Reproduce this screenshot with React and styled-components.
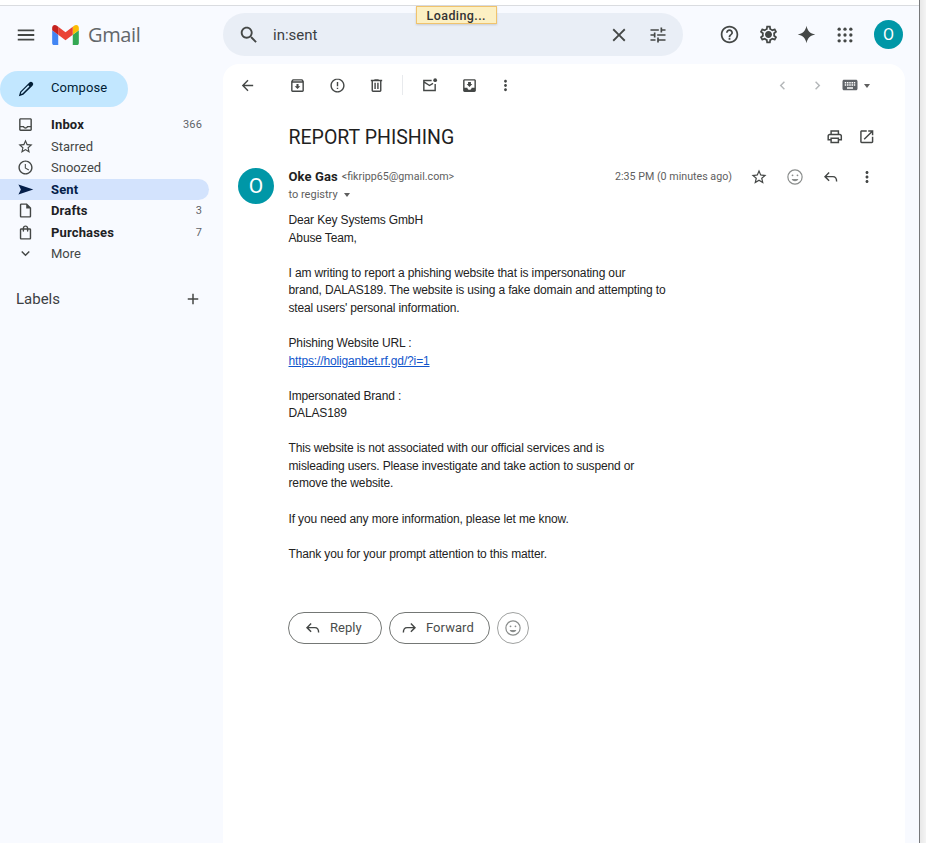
import React from 'react'
import styled, { createGlobalStyle } from 'styled-components'

const GlobalStyle = createGlobalStyle`
  html, body {
    margin: 0;
    padding: 0;
    height: 100%;
    background: #fff;
    overflow: hidden;
  }
  * { box-sizing: border-box; }
`

const Window = styled.div`
  position: relative;
  display: flex;
  width: 926px;
  height: 843px;
  font-family: Roboto, "Liberation Sans", sans-serif;
  color: #202124;
`

const Shell = styled.div`
  width: 919px;
  height: 843px;
  display: flex;
  flex-direction: column;
  background: #f8faff;
  border-top: 1px solid #dadce0;
  margin-top: 5px;
  overflow: hidden;
`

const WindowEdge = styled.div`
  width: 7px;
  height: 843px;
  border-left: 1px solid #77787a;
  background: linear-gradient(to right, #e8e8e8, #f4f4f4);
`

const LoadingTag = styled.div`
  position: absolute;
  left: 415.5px;
  top: 6px;
  width: 81.5px;
  height: 18px;
  display: flex;
  align-items: center;
  justify-content: center;
  background: #fcf0c3;
  border: 1px solid #f0c36d;
  box-shadow: 0 1px 2px rgba(0, 0, 0, 0.15);
  font-size: 12.5px;
  font-weight: 500;
  letter-spacing: 0.4px;
  color: #333;
`

const Header = styled.header`
  height: 58px;
  flex: none;
  display: flex;
  align-items: center;
  padding-bottom: 1px;
`

const Brand = styled.div`
  width: 223px;
  flex: none;
  display: flex;
  align-items: center;
  padding-left: 15px;
`

const Wordmark = styled.span`
  margin-left: 9px;
  font-family: "Open Sans", sans-serif;
  font-size: 20px;
  letter-spacing: -0.35px;
  color: #63676b;
`

const SearchBar = styled.div`
  width: 460px;
  height: 43px;
  flex: none;
  display: flex;
  align-items: center;
  padding: 0 15px 0 15px;
  border-radius: 22px;
  background: #e9eef6;
`

const SearchText = styled.span`
  flex: 1;
  margin-left: 13px;
  font-size: 15px;
  color: #3c4043;
`

const SearchClear = styled.span`
  display: flex;
  margin-right: 18px;
`

const HeaderActions = styled.div`
  flex: 1;
  display: flex;
  align-items: center;
  padding-left: 36px;
  gap: 17.5px;
`

const Avatar = styled.div`
  width: ${(p) => p.$size}px;
  height: ${(p) => p.$size}px;
  flex: none;
  display: flex;
  align-items: center;
  justify-content: center;
  border-radius: 50%;
  background: #0097a7;
  color: #fff;
  font-size: ${(p) => p.$font}px;
`

const TopAvatar = styled(Avatar)`
  margin-left: 2px;
`

const Body = styled.div`
  flex: 1;
  display: flex;
  min-height: 0;
`

const Sidebar = styled.nav`
  width: 223px;
  flex: none;
  padding-top: 7px;
`

const Compose = styled.div`
  width: 128px;
  height: 36px;
  display: flex;
  align-items: center;
  gap: 16px;
  padding-left: 17px;
  margin-bottom: 7px;
  border-radius: 18px;
  background: #c2e7ff;
  font-size: 13px;
  letter-spacing: 0.1px;
  color: #001d35;
`

const ComposeLabel = styled.span`
  margin-bottom: 3px;
`

const NavRow = styled.div`
  width: 209px;
  height: 21.5px;
  display: flex;
  align-items: center;
  padding: 0 7px 0 17px;
  border-radius: 0 11px 11px 0;
  background: ${(p) => (p.$active ? '#d3e3fd' : 'transparent')};
  color: ${(p) => (p.$active ? '#041e49' : '#202124')};
  font-size: 13px;
  font-weight: ${(p) => (p.$bold ? 700 : 400)};
  letter-spacing: ${(p) => (p.$bold ? '0.15px' : '0')};
`

const NavLabel = styled.span`
  flex: 1;
  margin-left: 17px;
  color: ${(p) => (p.$muted ? '#444746' : 'inherit')};
`

const NavCount = styled.span`
  font-size: 11px;
  font-weight: 400;
  color: #5f6368;
`

const LabelsHeading = styled.div`
  width: 209px;
  display: flex;
  align-items: center;
  justify-content: space-between;
  margin-top: 25px;
  padding: 0 7px 0 16px;
  font-size: 15px;
  color: #3c4043;
`

const Card = styled.main`
  width: 682px;
  flex: none;
  background: #fff;
  border-radius: 16px 16px 0 0;
`

const Toolbar = styled.div`
  height: 42px;
  display: flex;
  align-items: center;
  padding: 0 35px 0 16px;
`

const ToolGroup = styled.div`
  display: flex;
  align-items: center;
  gap: ${(p) => p.$gap || 0}px;
  margin-left: ${(p) => p.$left || 0}px;
`

const ToolDivider = styled.span`
  width: 1px;
  height: 20px;
  margin: 0 18px 0 17px;
  background: #e8eaed;
`

const Spacer = styled.span`
  flex: 1;
`

const SubjectRow = styled.div`
  display: flex;
  align-items: center;
  height: 32px;
  margin-top: 15px;
  padding: 0 30px 0 65.5px;
`

const Subject = styled.h1`
  flex: 1;
  margin: 0;
  font-size: 19.5px;
  font-weight: 400;
  color: #1f1f1f;
`

const SubjectActions = styled.div`
  display: flex;
  gap: 14.5px;
`

const Message = styled.article`
  display: flex;
  padding: 15px 0 0 15px;
`

const MessageMain = styled.div`
  flex: 1;
  margin-left: 14.5px;
`

const SenderRow = styled.div`
  display: flex;
  align-items: center;
  height: 18px;
  padding-right: 29px;
`

const SenderText = styled.div`
  flex: 1;
  display: flex;
  align-items: center;
  margin-bottom: 2px;
`

const SenderName = styled.span`
  font-size: 13px;
  font-weight: 700;
  letter-spacing: 0.1px;
  color: #1f1f1f;
`

const SenderMail = styled.span`
  flex: 1;
  margin-left: 4px;
  font-size: 10.7px;
  color: #5e5e5e;
`

const Timestamp = styled.span`
  margin-right: 18px;
  font-size: 10.7px;
  color: #5e5e5e;
`

const MessageActions = styled.div`
  display: flex;
  align-items: center;
  gap: 18px;
`

const Recipient = styled.div`
  display: flex;
  align-items: center;
  height: 16px;
  font-size: 11px;
  color: #5e5e5e;
`

const Caret = styled.span`
  width: 0;
  height: 0;
  margin-left: ${(p) => p.$left}px;
  margin-top: 2px;
  border-left: 3.5px solid transparent;
  border-right: 3.5px solid transparent;
  border-top: 4px solid #5e5e5e;
`

const MessageText = styled.div`
  margin-top: 10px;
  font-family: "Liberation Sans", Arial, sans-serif;
  font-size: 12px;
  letter-spacing: -0.14px;
  line-height: 17.56px;
  color: #222;
`

const Link = styled.a`
  color: #1155cc;
  text-decoration: underline;
`

const ReplyRow = styled.div`
  display: flex;
  align-items: center;
  gap: 7px;
  margin-top: 48.5px;
  margin-left: -0.5px;
`

const PillButton = styled.div`
  height: 32px;
  width: ${(p) => p.$width}px;
  display: flex;
  align-items: center;
  gap: 8px;
  padding-left: ${(p) => p.$pad}px;
  border: 1px solid #747775;
  border-radius: 16px;
  font-size: 13px;
  font-weight: 450;
  letter-spacing: 0.05px;
  color: #4a4d4c;
`

const RoundButton = styled.div`
  width: 32px;
  height: 32px;
  display: flex;
  align-items: center;
  justify-content: center;
  border: 1px solid #a0a2a1;
  border-radius: 50%;
`

const GlyphSvg = styled.svg`
  display: block;
  flex: none;
`

const LogoSvg = styled(GlyphSvg)`
  margin-left: 15px;
`

function Glyph({ size = 20, color = '#444746', d, children }) {
  return (
    <GlyphSvg width={size} height={size} viewBox="0 0 24 24" fill={color}>
      {d && <path d={d} />}
      {children}
    </GlyphSvg>
  )
}

function Stroke({ size = 20, color = '#444746', width = 2, children }) {
  return (
    <GlyphSvg width={size} height={size} viewBox="0 0 24 24" fill="none" stroke={color} strokeWidth={width}>
      {children}
    </GlyphSvg>
  )
}

function GmailLogo() {
  return (
    <LogoSvg width="27" height="20" viewBox="52 42 88 66">
      <path fill="#4285f4" d="M58 108h14V74L52 59v43c0 3.32 2.69 6 6 6" />
      <path fill="#34a853" d="M120 108h14c3.32 0 6-2.69 6-6V59l-20 15" />
      <path fill="#fbbc04" d="M120 48v26l20-15v-8c0-7.42-8.47-11.65-14.4-7.2" />
      <path fill="#ea4335" d="M72 74V48l24 18 24-18v26L96 92" />
      <path fill="#c5221f" d="M52 51v8l20 15V48l-5.6-4.2c-5.94-4.45-14.4-.22-14.4 7.2" />
    </LogoSvg>
  )
}

function ReplyIcon({ size = 18, color = '#444746' }) {
  return (
    <Stroke size={size} color={color} width={1.9}>
      <path d="M9.5 6L4 11.5 9.5 17M4 11.5h10.5c3 0 5 2 5 6.5" />
    </Stroke>
  )
}

function ForwardIcon({ size = 18, color = '#444746' }) {
  return (
    <Stroke size={size} color={color} width={1.9}>
      <path d="M14.5 6L20 11.5 14.5 17M20 11.5H9.5c-3 0-5 2-5 6.5" />
    </Stroke>
  )
}

function SmileIcon({ size = 18, color = '#8a8d8c' }) {
  return (
    <Stroke size={size} color={color} width={1.6}>
      <circle cx="12" cy="12" r="9.5" />
      <circle cx="8.7" cy="9.7" r="1.2" fill={color} stroke="none" />
      <circle cx="15.3" cy="9.7" r="1.2" fill={color} stroke="none" />
      <path d="M7.5 14.5h9c-.8 2-2.5 3-4.5 3s-3.7-1-4.5-3z" fill={color} stroke="none" />
    </Stroke>
  )
}

const paths = {
  menu: 'M3 18h18v-2H3v2zm0-5h18v-2H3v2zm0-7v2h18V6H3z',
  search: 'M15.5 14h-.79l-.28-.27C15.41 12.59 16 11.11 16 9.5 16 5.91 13.09 3 9.5 3S3 5.91 3 9.5 5.91 16 9.5 16c1.61 0 3.09-.59 4.23-1.57l.27.28v.79l5 4.99L20.49 19l-4.99-5zm-6 0C7.01 14 5 11.99 5 9.5S7.01 5 9.5 5 14 7.01 14 9.5 11.99 14 9.5 14z',
  close: 'M19 6.41L17.59 5 12 10.59 6.41 5 5 6.41 10.59 12 5 17.59 6.41 19 12 13.41 17.59 19 19 17.59 13.41 12z',
  tune: 'M3 17v2h6v-2H3zM3 5v2h10V5H3zm10 16v-2h8v-2h-8v-2h-2v6h2zM7 9v2H3v2h4v2h2V9H7zm14 4v-2H11v2h10zm-6-4h2V7h4V5h-4V3h-2v6z',
  help: 'M11 18h2v-2h-2v2zm1-16C6.48 2 2 6.48 2 12s4.48 10 10 10 10-4.48 10-10S17.52 2 12 2zm0 18c-4.41 0-8-3.59-8-8s3.59-8 8-8 8 3.59 8 8-3.59 8-8 8zm0-14c-2.21 0-4 1.79-4 4h2c0-1.1.9-2 2-2s2 .9 2 2c0 2-3 1.75-3 5h2c0-2.25 3-2.5 3-5 0-2.21-1.79-4-4-4z',
  settings: 'M19.43 12.98c.04-.32.07-.64.07-.98 0-.34-.03-.66-.07-.98l2.11-1.65c.19-.15.24-.42.12-.64l-2-3.46c-.09-.16-.26-.25-.44-.25-.06 0-.12.01-.17.03l-2.49 1c-.52-.4-1.08-.73-1.69-.98l-.38-2.65C14.46 2.18 14.25 2 14 2h-4c-.25 0-.46.18-.49.42l-.38 2.65c-.61.25-1.17.59-1.69.98l-2.49-1c-.06-.02-.12-.03-.18-.03-.17 0-.34.09-.43.25l-2 3.46c-.13.22-.07.49.12.64l2.11 1.65c-.04.32-.07.65-.07.98 0 .33.03.66.07.98l-2.11 1.65c-.19.15-.24.42-.12.64l2 3.46c.09.16.26.25.44.25.06 0 .12-.01.17-.03l2.49-1c.52.4 1.08.73 1.69.98l.38 2.65c.03.24.24.42.49.42h4c.25 0 .46-.18.49-.42l.38-2.65c.61-.25 1.17-.59 1.69-.98l2.49 1c.06.02.12.03.18.03.17 0 .34-.09.43-.25l2-3.46c.12-.22.07-.49-.12-.64l-2.11-1.65zm-1.98-1.71c.04.31.05.52.05.73 0 .21-.02.43-.05.73l-.14 1.13.89.7 1.08.84-.7 1.21-1.27-.51-1.04-.42-.9.68c-.43.32-.84.56-1.25.73l-1.06.43-.16 1.13-.2 1.35h-1.4l-.19-1.35-.16-1.13-1.06-.43c-.43-.18-.83-.41-1.23-.71l-.91-.7-1.06.43-1.27.51-.7-1.21 1.08-.84.89-.7-.14-1.13c-.03-.31-.05-.54-.05-.74s.02-.43.05-.73l.14-1.13-.89-.7-1.08-.84.7-1.21 1.27.51 1.04.42.9-.68c.43-.32.84-.56 1.25-.73l1.06-.43.16-1.13.2-1.35h1.39l.19 1.35.16 1.13 1.06.43c.43.18.83.41 1.23.71l.91.7 1.06-.43 1.27-.51.7 1.21-1.07.85-.89.7.14 1.13zM12 8c-2.21 0-4 1.79-4 4s1.79 4 4 4 4-1.79 4-4-1.79-4-4-4z',
  sparkle: 'M12 2c.9 5.6 4.4 9.1 10 10-5.6.9-9.1 4.4-10 10-.9-5.6-4.4-9.1-10-10 5.6-.9 9.1-4.4 10-10z',
  compose: 'M20.7 3.3a3 3 0 0 0-4.2 0L4.2 15.6 2.5 21.5l5.9-1.7L20.7 7.5a3 3 0 0 0 0-4.2zM7.3 18l-2.2.6.6-2.2L15 7.1l1.6 1.6L7.3 18z',
  inbox: 'M19 3H5c-1.1 0-2 .9-2 2v14c0 1.1.9 2 2 2h14c1.1 0 2-.9 2-2V5c0-1.1-.9-2-2-2zm0 16H5v-3h3.56c.69 1.19 1.97 2 3.45 2s2.75-.81 3.45-2H19v3zm0-5h-4.99c0 1.1-.9 2-2 2s-2-.9-2-2H5V5h14v9z',
  star: 'M22 9.24l-7.19-.62L12 2 9.19 8.63 2 9.24l5.46 4.73L5.82 21 12 17.27 18.18 21l-1.63-7.03L22 9.24zM12 15.4l-3.76 2.27 1-4.28-3.32-2.88 4.38-.38L12 6.1l1.71 4.04 4.38.38-3.32 2.88 1 4.28L12 15.4z',
  snooze: 'M11.99 2C6.47 2 2 6.48 2 12s4.47 10 9.99 10C17.52 22 22 17.52 22 12S17.52 2 11.99 2zM12 20c-4.42 0-8-3.58-8-8s3.58-8 8-8 8 3.58 8 8-3.58 8-8 8zm.5-13H11v6l5.25 3.15.75-1.23-4.5-2.67z',
  sent: 'M2 5l21 7-21 7 3.5-7z',
  draft: 'M14 2H6c-1.1 0-1.99.9-1.99 2L4 20c0 1.1.89 2 1.99 2H18c1.1 0 2-.9 2-2V8l-6-6zM6 20V4h7v5h5v11H6z',
  bag: 'M18 6h-2c0-2.21-1.79-4-4-4S8 3.79 8 6H6c-1.1 0-2 .9-2 2v12c0 1.1.9 2 2 2h12c1.1 0 2-.9 2-2V8c0-1.1-.9-2-2-2zm-6-2c1.1 0 2 .9 2 2h-4c0-1.1.9-2 2-2zm6 16H6V8h2v2c0 .55.45 1 1 1s1-.45 1-1V8h4v2c0 .55.45 1 1 1s1-.45 1-1V8h2v12z',
  more: 'M16.59 8.59L12 13.17 7.41 8.59 6 10l6 6 6-6z',
  add: 'M19 13h-6v6h-2v-6H5v-2h6V5h2v6h6v2z',
  back: 'M20 11H7.83l5.59-5.59L12 4l-8 8 8 8 1.41-1.41L7.83 13H20v-2z',
  archive: 'M20.54 5.23l-1.39-1.68C18.88 3.21 18.47 3 18 3H6c-.47 0-.88.21-1.16.55L3.46 5.23C3.17 5.57 3 6.02 3 6.5V19c0 1.1.9 2 2 2h14c1.1 0 2-.9 2-2V6.5c0-.48-.17-.93-.46-1.27zM6.24 5h11.52l.81.97H5.44l.8-.97zM5 19V8h14v11H5zm8.45-9h-2.9v3H8l4 4 4-4h-2.55z',
  report: 'M11 15h2v2h-2v-2zm0-8h2v6h-2V7zm1-5C6.47 2 2 6.48 2 12s4.47 10 9.99 10C17.52 22 22 17.52 22 12S17.52 2 11.99 2zM12 20c-4.42 0-8-3.58-8-8s3.58-8 8-8 8 3.58 8 8-3.58 8-8 8z',
  trash: 'M15 4V3H9v1H4v2h1v13c0 1.1.9 2 2 2h10c1.1 0 2-.9 2-2V6h1V4h-5zm2 15H7V6h10v13zM9 8h2v9H9zm4 0h2v9h-2z',
  moveInbox: 'M19 3H4.99c-1.11 0-1.98.9-1.98 2L3 19c0 1.1.88 2 1.99 2H19c1.1 0 2-.9 2-2V5c0-1.1-.9-2-2-2zm0 12h-4c0 1.66-1.35 3-3 3s-3-1.34-3-3H4.99V5H19v10zm-3-5h-2V7h-4v3H8l4 4 4-4z',
  dots: 'M12 8c1.1 0 2-.9 2-2s-.9-2-2-2-2 .9-2 2 .9 2 2 2zm0 2c-1.1 0-2 .9-2 2s.9 2 2 2 2-.9 2-2-.9-2-2-2zm0 6c-1.1 0-2 .9-2 2s.9 2 2 2 2-.9 2-2-.9-2-2-2z',
  prev: 'M15.41 7.41L14 6l-6 6 6 6 1.41-1.41L10.83 12z',
  next: 'M10 6L8.59 7.41 13.17 12l-4.58 4.59L10 18l6-6z',
  keyboard: 'M20 5H4c-1.1 0-1.99.9-1.99 2L2 17c0 1.1.9 2 2 2h16c1.1 0 2-.9 2-2V7c0-1.1-.9-2-2-2zm-9 3h2v2h-2V8zm0 3h2v2h-2v-2zM8 8h2v2H8V8zm0 3h2v2H8v-2zm-1 2H5v-2h2v2zm0-3H5V8h2v2zm9 7H8v-2h8v2zm0-4h-2v-2h2v2zm0-3h-2V8h2v2zm3 3h-2v-2h2v2zm0-3h-2V8h2v2z',
  print: 'M19 8h-1V3H6v5H5c-1.66 0-3 1.34-3 3v6h4v4h12v-4h4v-6c0-1.66-1.34-3-3-3zM8 5h8v3H8V5zm8 14H8v-4h8v4zm4-4h-2v-2H6v2H4v-4c0-.55.45-1 1-1h14c.55 0 1 .45 1 1v4z',
  external: 'M19 19H5V5h7V3H5c-1.11 0-2 .9-2 2v14c0 1.1.89 2 2 2h14c1.1 0 2-.9 2-2v-7h-2v7zM14 3v2h3.59l-9.83 9.83 1.41 1.41L19 6.41V10h2V3h-7z',
}

const navItems = [
  { icon: 'inbox', label: 'Inbox', count: '366', bold: true },
  { icon: 'star', label: 'Starred' },
  { icon: 'snooze', label: 'Snoozed' },
  { icon: 'sent', label: 'Sent', bold: true, active: true },
  { icon: 'draft', label: 'Drafts', count: '3', bold: true },
  { icon: 'bag', label: 'Purchases', count: '7', bold: true },
  { icon: 'more', label: 'More' },
]

const dotRows = [5, 12, 19]

function App() {
  return (
    <Window>
      <GlobalStyle />
      <Shell>
        <Header>
          <Brand>
            <Glyph d={paths.menu} size={22} />
            <GmailLogo />
            <Wordmark>Gmail</Wordmark>
          </Brand>
          <SearchBar>
            <Glyph d={paths.search} size={22} />
            <SearchText>in:sent</SearchText>
            <SearchClear>
              <Glyph d={paths.close} size={22} />
            </SearchClear>
            <Glyph d={paths.tune} size={20} />
          </SearchBar>
          <HeaderActions>
            <Glyph d={paths.help} size={21} />
            <Glyph d={paths.settings} size={21} />
            <Glyph d={paths.sparkle} size={21} />
            <Glyph size={20}>
              {dotRows.map((y) =>
                dotRows.map((x) => <circle key={`${x}-${y}`} cx={x} cy={y} r="2" />)
              )}
            </Glyph>
            <TopAvatar $size={29} $font={16}>O</TopAvatar>
          </HeaderActions>
        </Header>
        <Body>
          <Sidebar>
            <Compose>
              <Glyph d={paths.compose} size={18} color="#001d35" />
              <ComposeLabel>Compose</ComposeLabel>
            </Compose>
            {navItems.map((item) => (
              <NavRow key={item.label} $bold={item.bold} $active={item.active}>
                <Glyph
                  d={paths[item.icon]}
                  size={17}
                  color={item.active ? '#041e49' : '#444746'}
                />
                <NavLabel $muted={!item.bold}>{item.label}</NavLabel>
                {item.count && <NavCount>{item.count}</NavCount>}
              </NavRow>
            ))}
            <LabelsHeading>
              Labels
              <Glyph d={paths.add} size={18} />
            </LabelsHeading>
          </Sidebar>
          <Card>
            <Toolbar>
              <Glyph d={paths.back} size={17} />
              <ToolGroup $gap={22.5} $left={33}>
                <Glyph d={paths.archive} size={17} />
                <Glyph d={paths.report} size={17} />
                <Glyph d={paths.trash} size={17} />
              </ToolGroup>
              <ToolDivider />
              <ToolGroup $gap={23}>
                <Stroke size={17} width={2}>
                  <path d="M15 5H4v14h16V10M4 7l8 5 5-3" />
                  <circle cx="20" cy="4.5" r="2.6" fill="#444746" stroke="none" />
                </Stroke>
                <Glyph d={paths.moveInbox} size={17} />
              </ToolGroup>
              <ToolGroup $left={19}>
                <Glyph d={paths.dots} size={17} />
              </ToolGroup>
              <Spacer />
              <ToolGroup $gap={18}>
                <Glyph d={paths.prev} size={17} color="#b4b7b9" />
                <Glyph d={paths.next} size={17} color="#b4b7b9" />
              </ToolGroup>
              <ToolGroup $left={15.5}>
                <Glyph d={paths.keyboard} size={18} color="#5f6368" />
                <Caret $left={5} />
              </ToolGroup>
            </Toolbar>
            <SubjectRow>
              <Subject>REPORT PHISHING</Subject>
              <SubjectActions>
                <Glyph d={paths.print} size={17.5} />
                <Glyph d={paths.external} size={17.5} />
              </SubjectActions>
            </SubjectRow>
            <Message>
              <Avatar $size={36} $font={21}>O</Avatar>
              <MessageMain>
                <SenderRow>
                  <SenderText>
                    <SenderName>Oke Gas</SenderName>
                    <SenderMail>&lt;fikripp65@gmail.com&gt;</SenderMail>
                    <Timestamp>2:35 PM (0 minutes ago)</Timestamp>
                  </SenderText>
                  <MessageActions>
                    <Glyph d={paths.star} size={18} />
                    <SmileIcon />
                    <ReplyIcon />
                    <Glyph d={paths.dots} size={18} />
                  </MessageActions>
                </SenderRow>
                <Recipient>
                  to registry
                  <Caret $left={6} />
                </Recipient>
                <MessageText>
                  Dear Key Systems GmbH<br />
                  Abuse Team,<br /><br />
                  I am writing to report a phishing website that is impersonating our<br />
                  brand, DALAS189. The website is using a fake domain and attempting to<br />
                  steal users' personal information.<br /><br />
                  Phishing Website URL :<br />
                  <Link href="#">https://holiganbet.rf.gd/?i=1</Link><br /><br />
                  Impersonated Brand :<br />
                  DALAS189<br /><br />
                  This website is not associated with our official services and is<br />
                  misleading users. Please investigate and take action to suspend or<br />
                  remove the website.<br /><br />
                  If you need any more information, please let me know.<br /><br />
                  Thank you for your prompt attention to this matter.
                </MessageText>
                <ReplyRow>
                  <PillButton $width={94} $pad={15}>
                    <ReplyIcon />
                    Reply
                  </PillButton>
                  <PillButton $width={101} $pad={10}>
                    <ForwardIcon />
                    Forward
                  </PillButton>
                  <RoundButton>
                    <SmileIcon />
                  </RoundButton>
                </ReplyRow>
              </MessageMain>
            </Message>
          </Card>
        </Body>
      </Shell>
      <WindowEdge />
      <LoadingTag>Loading...</LoadingTag>
    </Window>
  )
}

export default App
